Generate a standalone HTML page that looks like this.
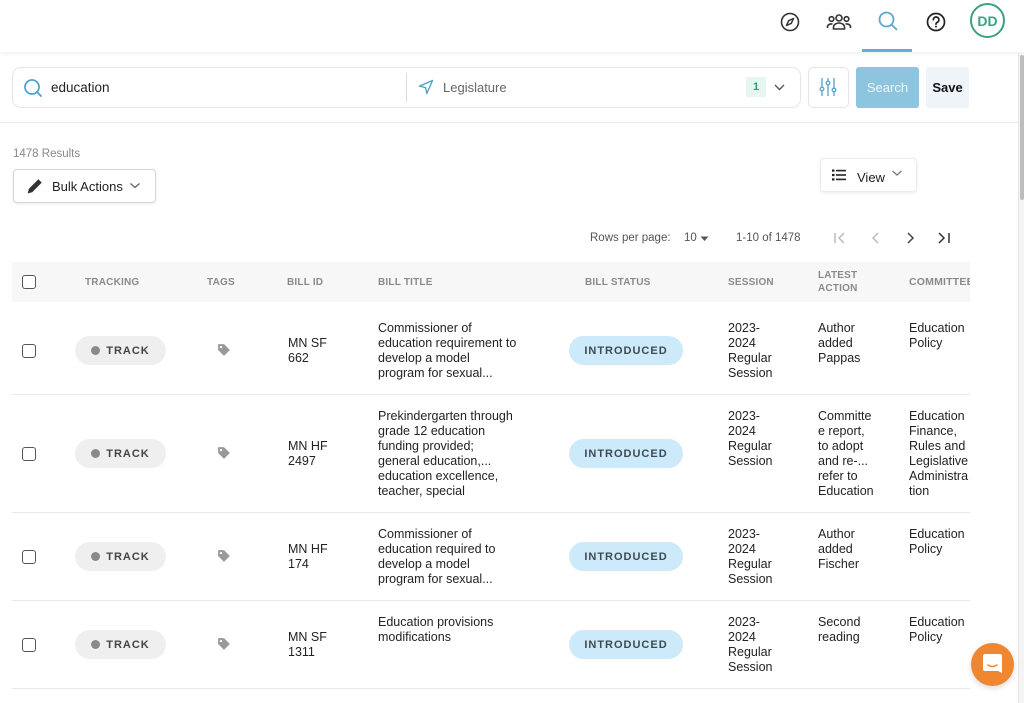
<!DOCTYPE html>
<html><head><meta charset="utf-8"><style>
*{box-sizing:border-box;margin:0;padding:0}
body{width:1024px;height:703px;overflow:hidden;background:#fff;font-family:"Liberation Sans",sans-serif;color:#222;position:relative}
.a{position:absolute}
.hdr{left:0;top:0;width:1024px;height:52px;background:#fff;box-shadow:0 2px 4px rgba(0,0,0,.06)}
.txt{font-size:12.5px;line-height:15px;color:#222}
.th{font-size:10px;font-weight:bold;color:#8a8a8a;letter-spacing:.2px;line-height:13px}
.cb{width:14px;height:14px;border:1.5px solid #555;border-radius:3px;background:#fff}
.track{width:91px;height:29px;border-radius:15px;background:#efefef;font-size:11px;font-weight:bold;color:#444;letter-spacing:1px;display:flex;align-items:center;justify-content:center}
.track i{display:inline-block;width:9px;height:9px;border-radius:50%;background:#8a8a8a;margin-right:6px}
.intro{width:114px;height:29px;border-radius:15px;background:#cdeafa;font-size:11px;font-weight:bold;color:#3e4a52;letter-spacing:1px;display:flex;align-items:center;justify-content:center}
.row{left:12px;width:958px;border-bottom:1.5px solid #e8e8e8}
</style></head><body>
<div class="a hdr"></div>
<svg class="a" style="left:779px;top:11px" width="22" height="22" viewBox="0 0 22 22"><circle cx="11" cy="11" r="8.5" fill="none" stroke="#333" stroke-width="1.6"/><path d="M14.5 7.5 L12.3 12.3 L7.5 14.5 L9.7 9.7 Z" fill="none" stroke="#333" stroke-width="1.5" stroke-linejoin="round"/></svg>
<svg class="a" style="left:826px;top:11px" width="26" height="22" viewBox="0 0 26 22"><circle cx="13" cy="7" r="3" fill="none" stroke="#333" stroke-width="1.6"/><circle cx="5.5" cy="8" r="2.3" fill="none" stroke="#333" stroke-width="1.6"/><circle cx="20.5" cy="8" r="2.3" fill="none" stroke="#333" stroke-width="1.6"/><path d="M7.5 18v-2a5.5 4 0 0 1 11 0v2Z" fill="none" stroke="#333" stroke-width="1.6"/><path d="M1.5 17v-1.5a4 3 0 0 1 5-2.5M24.5 17v-1.5a4 3 0 0 0-5-2.5" fill="none" stroke="#333" stroke-width="1.6"/></svg>
<svg class="a" style="left:877px;top:10px" width="22" height="22" viewBox="0 0 22 22"><circle cx="9.5" cy="9.5" r="7" fill="none" stroke="#5aa9d0" stroke-width="1.8"/><path d="M14.5 14.5L19.5 19.5" stroke="#5aa9d0" stroke-width="1.8" stroke-linecap="round"/></svg>
<div class="a" style="left:862px;top:49px;width:50px;height:3px;background:#69aed2"></div>
<svg class="a" style="left:925px;top:11px" width="22" height="22" viewBox="0 0 22 22"><circle cx="11" cy="11" r="8.5" fill="none" stroke="#222" stroke-width="1.7"/><path d="M8.3 8.8a2.8 2.8 0 1 1 3.8 2.6c-.8.4-1.1.9-1.1 1.8" fill="none" stroke="#222" stroke-width="1.7" stroke-linecap="round"/><circle cx="11" cy="15.6" r="1" fill="#222"/></svg>
<div class="a" style="left:970px;top:3px;width:35px;height:35px;border:2px solid #3aa184;border-radius:50%;color:#3aa184;font-weight:bold;font-size:14px;display:flex;align-items:center;justify-content:center">DD</div>
<div class="a" style="left:12px;top:67px;width:789px;height:41px;border:1px solid #e6e6e6;border-radius:9px"></div>
<svg class="a" style="left:23px;top:78px" width="20" height="20" viewBox="0 0 20 20"><circle cx="9" cy="9" r="7" fill="none" stroke="#4fa3cc" stroke-width="1.8"/><path d="M14 14l4 4" stroke="#4fa3cc" stroke-width="1.8" stroke-linecap="round"/></svg>
<div class="a" style="left:51px;top:80px;font-size:13.5px;color:#222">education</div>
<div class="a" style="left:406px;top:73px;width:1px;height:29px;background:#ddd"></div>
<svg class="a" style="left:418px;top:79px" width="16" height="16" viewBox="0 0 16 16"><path d="M14.5 1.5L1.5 7.2L7.5 8.5L8.8 14.5Z" fill="none" stroke="#4fa3cc" stroke-width="1.4" stroke-linejoin="round"/></svg>
<div class="a" style="left:443px;top:80px;font-size:13px;color:#666">Legislature</div>
<div class="a" style="left:746px;top:77px;width:20px;height:20px;background:#e6f7f2;color:#2e9a7a;font-size:11px;font-weight:bold;display:flex;align-items:center;justify-content:center">1</div>
<svg class="a" style="left:773px;top:82px" width="13" height="10" viewBox="0 0 13 10"><path d="M2 3l4.5 4.5L11 3" fill="none" stroke="#555" stroke-width="1.4"/></svg>
<div class="a" style="left:808px;top:67px;width:41px;height:41px;border:1px solid #e6e6e6;border-radius:5px"></div>
<svg class="a" style="left:819px;top:77px" width="18" height="20" viewBox="0 0 18 20"><g stroke="#5aa9d0" stroke-width="1.4" fill="none"><path d="M3 1v18M9 1v18M15 1v18"/><circle cx="3" cy="12" r="1.8" fill="#fff"/><circle cx="9" cy="6" r="1.8" fill="#fff"/><circle cx="15" cy="13" r="1.8" fill="#fff"/></g></svg>
<div class="a" style="left:856px;top:67px;width:63px;height:41px;background:#8ec5de;border-radius:3px;color:#eef7fb;font-size:13px;display:flex;align-items:center;justify-content:center">Search</div>
<div class="a" style="left:926px;top:67px;width:43px;height:41px;background:#eef4fa;border-radius:3px;color:#111;font-size:13px;font-weight:bold;display:flex;align-items:center;justify-content:center">Save</div>
<div class="a" style="left:0;top:122px;width:1018px;height:1px;background:#ececec"></div>
<div class="a" style="left:1018px;top:52px;width:6px;height:651px;background:#f4f4f4;border-left:1px solid #e6e6e6"></div>
<div class="a" style="left:1020px;top:55px;width:4px;height:145px;background:#bdbdbd;border-radius:2px"></div>
<div class="a" style="left:13px;top:148px;font-size:11.5px;color:#888">1478 Results</div>
<div class="a" style="left:13px;top:169px;width:143px;height:34px;border:1px solid #d6d6d6;border-radius:4px;box-shadow:0 1px 3px rgba(0,0,0,.08)"></div>
<svg class="a" style="left:26px;top:177px" width="18" height="18" viewBox="0 0 16 16"><path d="M1.5 14.5l1-4L11 2l3 3-8.5 8.5Z" fill="#333"/></svg>
<div class="a" style="left:52px;top:179px;font-size:13px;color:#222">Bulk Actions</div>
<svg class="a" style="left:129px;top:181px" width="12" height="9" viewBox="0 0 12 9"><path d="M1.5 2.5l4.5 4 4.5-4" fill="none" stroke="#666" stroke-width="1.3"/></svg>
<div class="a" style="left:820px;top:158px;width:97px;height:34px;border:1px solid #ececec;border-radius:4px;box-shadow:0 1px 3px rgba(0,0,0,.08)"></div>
<svg class="a" style="left:832px;top:169px" width="14" height="12" viewBox="0 0 14 12"><g fill="#222"><rect x="0" y="0.5" width="2.5" height="2.2"/><rect x="0" y="4.9" width="2.5" height="2.2"/><rect x="0" y="9.3" width="2.5" height="2.2"/><rect x="4" y="0.8" width="10" height="1.6"/><rect x="4" y="5.2" width="10" height="1.6"/><rect x="4" y="9.6" width="10" height="1.6"/></g></svg>
<div class="a" style="left:857px;top:170px;font-size:13px;color:#222">View</div>
<svg class="a" style="left:891px;top:169px" width="12" height="9" viewBox="0 0 12 9"><path d="M1.5 2l4.5 4 4.5-4" fill="none" stroke="#777" stroke-width="1.3"/></svg>
<div class="a" style="left:590px;top:232px;font-size:11.5px;color:#555">Rows per page:</div>
<div class="a" style="left:684px;top:232px;font-size:11.5px;color:#555">10</div>
<svg class="a" style="left:700px;top:236px" width="9" height="6" viewBox="0 0 9 6"><path d="M0.5 0.5h8L4.5 5Z" fill="#555"/></svg>
<div class="a" style="left:736px;top:232px;font-size:11.5px;color:#555">1-10 of 1478</div>
<svg class="a" style="left:833px;top:231px" width="130" height="14" viewBox="0 0 130 14"><g fill="none" stroke-width="1.5"><path d="M2 2v10M11 2L6 7l5 5" stroke="#bbb"/><path d="M45 2L40 7l5 5" stroke="#bbb"/><path d="M75 2l5 5-5 5" stroke="#444"/><path d="M106 2l5 5-5 5M116 2v10" stroke="#333"/></g></svg>
<div class="a" style="left:12px;top:262px;width:958px;height:40px;background:#f7f7f7"></div>
<div class="a cb" style="left:22px;top:275px"></div>
<div class="a th" style="left:85px;top:276px">TRACKING</div>
<div class="a th" style="left:207px;top:276px">TAGS</div>
<div class="a th" style="left:287px;top:276px">BILL ID</div>
<div class="a th" style="left:378px;top:276px">BILL TITLE</div>
<div class="a th" style="left:585px;top:276px">BILL STATUS</div>
<div class="a th" style="left:728px;top:276px">SESSION</div>
<div class="a th" style="left:818px;top:269px">LATEST<br>ACTION</div>
<div class="a th" style="left:909px;top:276px;width:61px;overflow:hidden;white-space:nowrap;font-size:10.5px">COMMITTEE</div>
<div class="a row" style="top:302px;height:93px"></div>
<div class="a row" style="top:395px;height:118px"></div>
<div class="a row" style="top:513px;height:88px"></div>
<div class="a row" style="top:601px;height:88px"></div>

<div class="a cb" style="left:22px;top:344px"></div>
<div class="a track" style="left:75px;top:336px"><i></i>TRACK</div>
<svg class="a" style="left:217px;top:343px" width="14" height="14" viewBox="0 0 12 12"><path d="M1 1h5l5 5-5 5-5-5Z" fill="#999"/><circle cx="3.5" cy="3.5" r="1" fill="#fff"/></svg>
<div class="a txt" style="left:288px;top:336px">MN SF<br>662</div>
<div class="a txt" style="left:378px;top:321px">Commissioner of<br>education requirement to<br>develop a model<br>program for sexual...</div>
<div class="a intro" style="left:569px;top:336px">INTRODUCED</div>
<div class="a txt" style="left:728px;top:321px">2023-<br>2024<br>Regular<br>Session</div>
<div class="a txt" style="left:818px;top:321px">Author<br>added<br>Pappas</div>
<div class="a txt" style="left:909px;top:321px">Education<br>Policy</div>

<div class="a cb" style="left:22px;top:447px"></div>
<div class="a track" style="left:75px;top:439px"><i></i>TRACK</div>
<svg class="a" style="left:217px;top:446px" width="14" height="14" viewBox="0 0 12 12"><path d="M1 1h5l5 5-5 5-5-5Z" fill="#999"/><circle cx="3.5" cy="3.5" r="1" fill="#fff"/></svg>
<div class="a txt" style="left:288px;top:439px">MN HF<br>2497</div>
<div class="a txt" style="left:378px;top:409px">Prekindergarten through<br>grade 12 education<br>funding provided;<br>general education,...<br>education excellence,<br>teacher, special</div>
<div class="a intro" style="left:569px;top:439px">INTRODUCED</div>
<div class="a txt" style="left:728px;top:409px">2023-<br>2024<br>Regular<br>Session</div>
<div class="a txt" style="left:818px;top:409px">Committe<br>e report,<br>to adopt<br>and re-...<br>refer to<br>Education</div>
<div class="a txt" style="left:909px;top:409px;width:61px;overflow:hidden;white-space:nowrap">Education<br>Finance,<br>Rules and<br>Legislative<br>Administra<br>tion</div>

<div class="a cb" style="left:22px;top:550px"></div>
<div class="a track" style="left:75px;top:542px"><i></i>TRACK</div>
<svg class="a" style="left:217px;top:549px" width="14" height="14" viewBox="0 0 12 12"><path d="M1 1h5l5 5-5 5-5-5Z" fill="#999"/><circle cx="3.5" cy="3.5" r="1" fill="#fff"/></svg>
<div class="a txt" style="left:288px;top:542px">MN HF<br>174</div>
<div class="a txt" style="left:378px;top:527px">Commissioner of<br>education required to<br>develop a model<br>program for sexual...</div>
<div class="a intro" style="left:569px;top:542px">INTRODUCED</div>
<div class="a txt" style="left:728px;top:527px">2023-<br>2024<br>Regular<br>Session</div>
<div class="a txt" style="left:818px;top:527px">Author<br>added<br>Fischer</div>
<div class="a txt" style="left:909px;top:527px">Education<br>Policy</div>

<div class="a cb" style="left:22px;top:638px"></div>
<div class="a track" style="left:75px;top:630px"><i></i>TRACK</div>
<svg class="a" style="left:217px;top:637px" width="14" height="14" viewBox="0 0 12 12"><path d="M1 1h5l5 5-5 5-5-5Z" fill="#999"/><circle cx="3.5" cy="3.5" r="1" fill="#fff"/></svg>
<div class="a txt" style="left:288px;top:630px">MN SF<br>1311</div>
<div class="a txt" style="left:378px;top:615px">Education provisions<br>modifications</div>
<div class="a intro" style="left:569px;top:630px">INTRODUCED</div>
<div class="a txt" style="left:728px;top:615px">2023-<br>2024<br>Regular<br>Session</div>
<div class="a txt" style="left:818px;top:615px">Second<br>reading</div>
<div class="a txt" style="left:909px;top:615px">Education<br>Policy</div>

<div class="a" style="left:971px;top:643px;width:43px;height:43px;border-radius:50%;background:#f0862f;box-shadow:0 2px 6px rgba(0,0,0,.15)"></div>
<svg class="a" style="left:982px;top:653px" width="21" height="23" viewBox="0 0 21 23"><path d="M3 1h15a2 2 0 0 1 2 2v17l-4-2H3a2 2 0 0 1-2-2V3a2 2 0 0 1 2-2Z" fill="#fff"/><path d="M6 12q4.5 3 9 0" fill="none" stroke="#f0862f" stroke-width="1.5" stroke-linecap="round"/></svg>
</body></html>
